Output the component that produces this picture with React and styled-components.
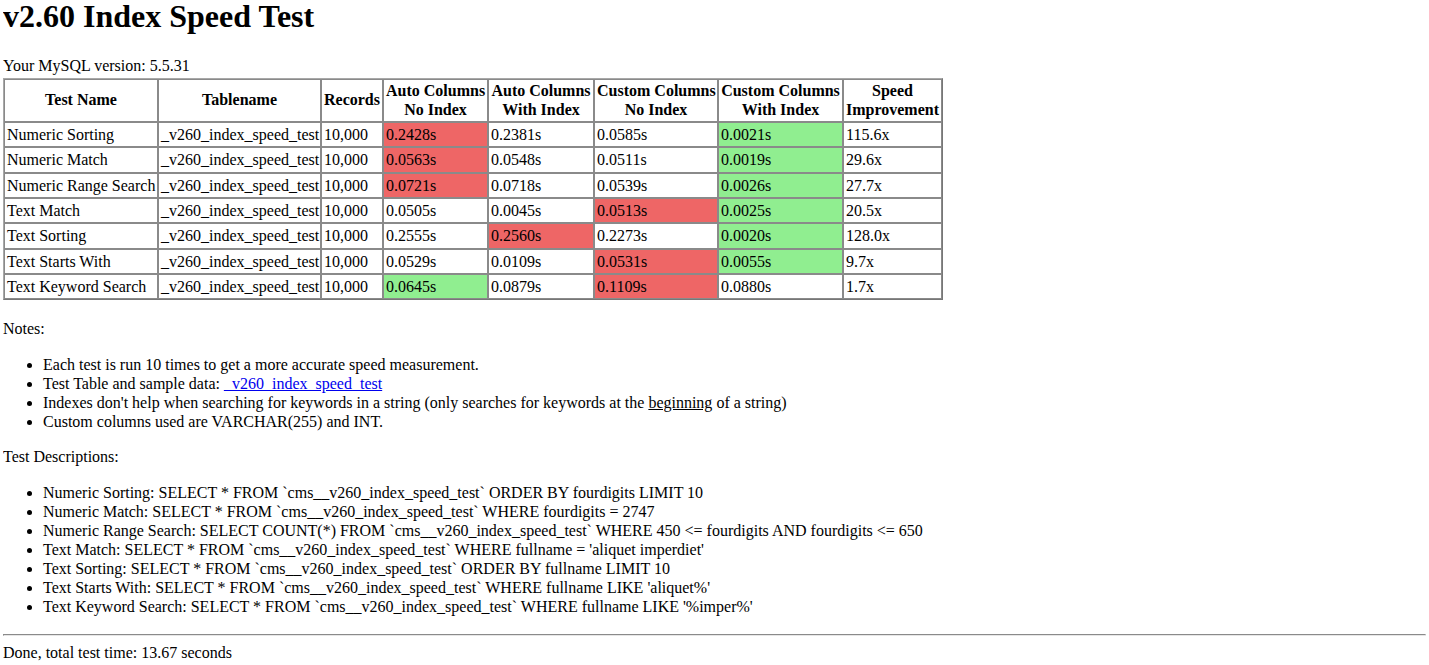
import styled, { createGlobalStyle } from "styled-components";

const GlobalStyle = createGlobalStyle`
  body {
    margin: 0 3px;
    font-family: "Liberation Serif", "Times New Roman", serif;
    font-size: 16px;
    line-height: 19px;
    color: #000;
    background: #fff;
  }
`;

const columns = [
  { label: ["Test Name"], width: 154 },
  { label: ["Tablename"], width: 163 },
  { label: ["Records"], width: 62 },
  { label: ["Auto Columns", "No Index"], width: 105 },
  { label: ["Auto Columns", "With Index"], width: 106 },
  { label: ["Custom Columns", "No Index"], width: 124 },
  { label: ["Custom Columns", "With Index"], width: 125 },
  { label: ["Speed", "Improvement"], width: 99 },
];

// tone per timing cell: r = slowest, g = fastest
const rows = [
  ["Numeric Sorting", ["0.2428s", "r"], ["0.2381s"], ["0.0585s"], ["0.0021s", "g"], "115.6x"],
  ["Numeric Match", ["0.0563s", "r"], ["0.0548s"], ["0.0511s"], ["0.0019s", "g"], "29.6x"],
  ["Numeric Range Search", ["0.0721s", "r"], ["0.0718s"], ["0.0539s"], ["0.0026s", "g"], "27.7x"],
  ["Text Match", ["0.0505s"], ["0.0045s"], ["0.0513s", "r"], ["0.0025s", "g"], "20.5x"],
  ["Text Sorting", ["0.2555s"], ["0.2560s", "r"], ["0.2273s"], ["0.0020s", "g"], "128.0x"],
  ["Text Starts With", ["0.0529s"], ["0.0109s"], ["0.0531s", "r"], ["0.0055s", "g"], "9.7x"],
  ["Text Keyword Search", ["0.0645s", "g"], ["0.0879s"], ["0.1109s", "r"], ["0.0880s"], "1.7x"],
];

const descriptions = [
  "Numeric Sorting: SELECT * FROM `cms__v260_index_speed_test` ORDER BY fourdigits LIMIT 10",
  "Numeric Match: SELECT * FROM `cms__v260_index_speed_test` WHERE fourdigits = 2747",
  "Numeric Range Search: SELECT COUNT(*) FROM `cms__v260_index_speed_test` WHERE 450 <= fourdigits AND fourdigits <= 650",
  "Text Match: SELECT * FROM `cms__v260_index_speed_test` WHERE fullname = 'aliquet imperdiet'",
  "Text Sorting: SELECT * FROM `cms__v260_index_speed_test` ORDER BY fullname LIMIT 10",
  "Text Starts With: SELECT * FROM `cms__v260_index_speed_test` WHERE fullname LIKE 'aliquet%'",
  "Text Keyword Search: SELECT * FROM `cms__v260_index_speed_test` WHERE fullname LIKE '%imper%'",
];

const tones = { r: "#ee6666", g: "#90ee90" };

export default function App() {
  return (
    <>
      <GlobalStyle />
      <Title>v2.60 Index Speed Test</Title>
      <Version>Your MySQL version: 5.5.31</Version>

      <ResultsTable>
        <colgroup>
          {columns.map((c) => (
            <col key={c.label.join()} width={c.width} />
          ))}
        </colgroup>
        <thead>
          <tr>
            {columns.map((c) => (
              <HeadCell key={c.label.join()}>
                {c.label.map((line, i) => (
                  <span key={line}>
                    {i > 0 && <br />}
                    {line}
                  </span>
                ))}
              </HeadCell>
            ))}
          </tr>
        </thead>
        <tbody>
          {rows.map(([name, a, b, c, d, speed]) => (
            <tr key={name}>
              <Cell>{name}</Cell>
              <Cell>_v260_index_speed_test</Cell>
              <Cell>10,000</Cell>
              {[a, b, c, d].map(([value, tone], i) => (
                <Cell key={i} $tone={tone}>
                  {value}
                </Cell>
              ))}
              <Cell>{speed}</Cell>
            </tr>
          ))}
        </tbody>
      </ResultsTable>

      <Para $top={19}>Notes:</Para>
      <List>
        <li>Each test is run 10 times to get a more accurate speed measurement.</li>
        <li>
          Test Table and sample data: <Link href="#">_v260_index_speed_test</Link>
        </li>
        <li>
          Indexes don't help when searching for keywords in a string (only searches for keywords at
          the <u>beginning</u> of a string)
        </li>
        <li>Custom columns used are VARCHAR(255) and INT.</li>
      </List>

      <Para $top={16}>Test Descriptions:</Para>
      <List>
        {descriptions.map((d) => (
          <li key={d}>{d}</li>
        ))}
      </List>

      <Rule />
      <Footer>Done, total test time: 13.67 seconds</Footer>
    </>
  );
}

const Title = styled.h1`
  font-size: 32px;
  line-height: 37px;
  font-weight: bold;
  margin: -2px 0 21px;
`;

const Version = styled.div`
  margin-bottom: 3px;
`;

const ResultsTable = styled.table`
  border: 1px solid;
  border-color: #a8a8a8 #777 #777 #a8a8a8;
  border-collapse: separate;
  border-spacing: 0;
  table-layout: fixed;
  width: 940px;
`;

const HeadCell = styled.th`
  box-sizing: border-box;
  border: 1px solid #8a8a8a;
  padding: 2px;
  line-height: 18.5px;
  font-weight: bold;
  text-align: center;
  vertical-align: middle;
  white-space: nowrap;
`;

const Cell = styled.td`
  box-sizing: border-box;
  border: 1px solid #8a8a8a;
  padding: 2px;
  height: 25.33px;
  white-space: nowrap;
  overflow: hidden;
  background: ${(p) => tones[p.$tone] || "transparent"};
`;

const Para = styled.p`
  margin: ${(p) => p.$top}px 0 17px;
`;

const List = styled.ul`
  margin: 16px 0;
  padding-left: 40px;
`;

const Link = styled.a`
  color: #0000ee;
  text-decoration: underline;
`;

const Rule = styled.hr`
  margin: 18px 0 7px;
  border: 1px solid;
  border-color: #8a8a8a #e6e6e6 #e6e6e6 #8a8a8a;
`;

const Footer = styled.div``;
